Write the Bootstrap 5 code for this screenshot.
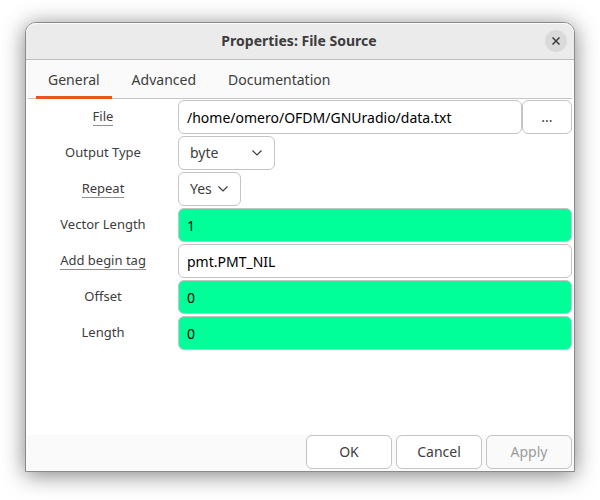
<!DOCTYPE html>
<html lang="en">
<head>
<meta charset="utf-8">
<meta name="viewport" content="width=device-width, initial-scale=1">
<title>Properties: File Source</title>
<link href="https://cdn.jsdelivr.net/npm/bootstrap@5.3.0/dist/css/bootstrap.min.css" rel="stylesheet">
<style>
  body { font-family: "Noto Sans", "Open Sans", sans-serif; font-size: 14px; line-height: 20px; color: #3d3d3d; background: #fff; padding: 22px 25px 28px; }
  .dialog { border: 1px solid #8b8b8b; border-radius: 11px 11px 0 0; box-shadow: 0 3px 22px rgba(0,0,0,.5); background: #fff; }
  .titlebar { height: 37px; background: #ebebeb; border-bottom: 1px solid #bfbfbf; border-radius: 10px 10px 0 0; box-shadow: inset 0 1px #fafafa; padding: 0 7px; }
  .titlebar h1 { font-size: 14px; line-height: 20px; padding-left: 20px; }
  .close-btn { width: 22px; height: 22px; background: #dadada; color: #3d3d3d; }
  .tabs { background: #fafafa; padding: 0 2px; }
  .tabs .nav { --bs-nav-link-color: #3d3d3d; --bs-nav-link-hover-color: #3d3d3d; --bs-nav-link-font-size: 14px; border-bottom: 1px solid #c4c4c4; padding-left: 8px; gap: 8px; }
  .tabs .nav-link { height: 39px; padding: 3px 12px 0; margin-bottom: -1px; border: 0; border-bottom: 3px solid transparent; background: none; line-height: 20px; }
  .tabs .nav-link.active { border-color: #e95420; }
  .fields { gap: 2px; padding: 1px 2px 8px; }
  .field { display: grid; grid-template-columns: 150px minmax(0, 1fr); align-items: center; }
  .field label { font-size: 13px; line-height: 16px; text-align: center; padding-bottom: 2px; }
  .hint { border-bottom: 1px solid #8f8f8f; }
  .field .form-control, .field .form-select, .act { height: 34px; border: 1px solid #c4c4c4; border-radius: 6px; font-size: 14px; line-height: 20px; }
  .field .form-control { padding: 6px 8px; color: #000; }
  .field .form-control.numeric { background: #00ff99; }
  .field .form-select { color: #3d3d3d; padding: 6px 11px; background-image: url("data:image/svg+xml,%3Csvg xmlns='http://www.w3.org/2000/svg' viewBox='0 0 12 8'%3E%3Cpath d='M1.5 1.5 6 6l4.500-4.500' fill='none' stroke='%233d3d3d' stroke-width='1.200'/%3E%3C/svg%3E"); background-size: 12px 8px; background-position: right 11px center; }
  .select-wide { width: 97px; }
  .select-slim { width: 63px; }
  .act { --bs-btn-color: #3d3d3d; --bs-btn-bg: #fff; --bs-btn-disabled-color: #9c9c9c; --bs-btn-disabled-bg: #fafafa; --bs-btn-disabled-opacity: 1; padding: 0; width: 86px; }
  .act:disabled { border-color: #c4c4c4; }
  .act-browse { width: 50px; }
  .actions { background: #fafafa; padding: 0 2px 2px; }
</style>
<script src="https://cdn.jsdelivr.net/npm/bootstrap@5.3.0/dist/js/bootstrap.bundle.min.js"></script>
</head>
<body class="min-vh-100 d-flex">
<main class="dialog flex-grow-1 d-flex flex-column">
  <header class="titlebar d-flex align-items-center">
    <h1 class="fw-bold text-center flex-grow-1 m-0">Properties: File Source</h1>
    <button type="button" class="close-btn btn rounded-circle border-0 p-0 d-flex align-items-center justify-content-center" aria-label="Close">
      <svg width="8" height="8" viewBox="0 0 8 8" fill="none" stroke="currentColor" stroke-width="1.500"><path d="M.5.5l7 7M7.500.5l-7 7"/></svg>
    </button>
  </header>
  <nav class="tabs">
    <div class="nav" role="tablist">
      <button type="button" class="nav-link active" role="tab" aria-selected="true">General</button>
      <button type="button" class="nav-link" role="tab" aria-selected="false">Advanced</button>
      <button type="button" class="nav-link" role="tab" aria-selected="false">Documentation</button>
    </div>
  </nav>
  <form class="flex-grow-1 d-flex flex-column">
    <div class="fields flex-grow-1 d-flex flex-column">
      <div class="field"><label for="file"><span class="hint">File</span></label>
        <div class="d-flex"><input id="file" class="form-control" type="text" value="/home/omero/OFDM/GNUradio/data.txt"><button type="button" class="btn act act-browse flex-shrink-0" aria-label="Browse">...</button></div></div>
      <div class="field"><label for="type">Output Type</label>
        <select id="type" class="form-select select-wide"><option>byte</option><option>complex</option><option>float</option></select></div>
      <div class="field"><label for="repeat"><span class="hint">Repeat</span></label>
        <select id="repeat" class="form-select select-slim"><option>Yes</option><option>No</option></select></div>
      <div class="field"><label for="vlen">Vector Length</label><input id="vlen" class="form-control numeric" type="text" value="1"></div>
      <div class="field"><label for="tag"><span class="hint">Add begin tag</span></label><input id="tag" class="form-control" type="text" value="pmt.PMT_NIL"></div>
      <div class="field"><label for="offset">Offset</label><input id="offset" class="form-control numeric" type="text" value="0"></div>
      <div class="field"><label for="length">Length</label><input id="length" class="form-control numeric" type="text" value="0"></div>
    </div>
    <footer class="actions d-flex justify-content-end gap-1">
      <button type="button" class="btn act">OK</button>
      <button type="button" class="btn act">Cancel</button>
      <button type="button" class="btn act" disabled>Apply</button>
    </footer>
  </form>
</main>
</body>
</html>
